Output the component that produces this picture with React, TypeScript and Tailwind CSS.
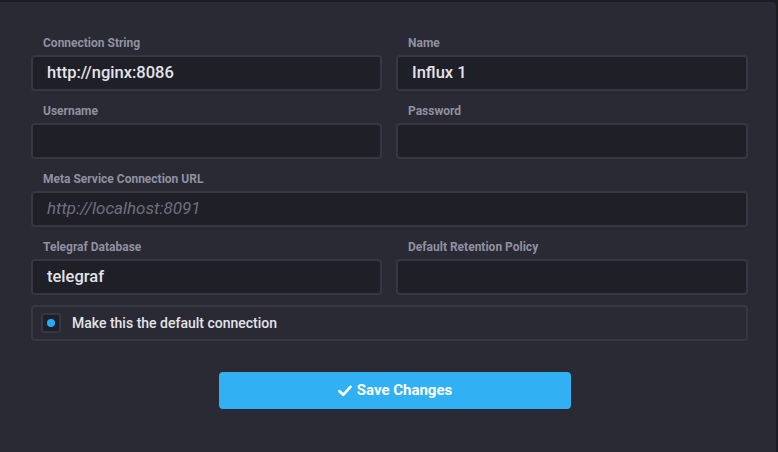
import React from 'react';

const font = { fontFamily: 'Roboto, "Liberation Sans", sans-serif' };

function Field({
  label,
  value,
  placeholder,
  className = '',
}: {
  label: string;
  value?: string;
  placeholder?: string;
  className?: string;
}) {
  return (
    <div className={`flex flex-col ${className}`}>
      <label className="mb-1 h-4 pl-3 text-[12px] font-bold leading-4 text-[#8f91a1]">{label}</label>
      <div className="flex h-9 items-center rounded-[4px] border-2 border-[#363743] bg-[#1f1f27] px-[14px]">
        {value ? (
          <span className="text-[16.5px] font-medium text-[#e3e3ea]">{value}</span>
        ) : placeholder ? (
          <span className="text-[17px] italic text-[#6d6f7e]">{placeholder}</span>
        ) : null}
      </div>
    </div>
  );
}

export default function App() {
  return (
    <div style={font} className="h-[452px] w-[778px] overflow-hidden bg-[#1c1c22]">
      <div className="mt-[2px] mr-[2px] h-[450px] rounded-tr-[4px] bg-[#292a33] pl-[31px] pt-[33px]">
        <div className="grid w-[717px] grid-cols-[351px_352px] gap-x-[14px] gap-y-3">
          <Field label="Connection String" value="http://nginx:8086" />
          <Field label="Name" value="Influx 1" />
          <Field label="Username" />
          <Field label="Password" />
          <Field
            label="Meta Service Connection URL"
            placeholder="http://localhost:8091"
            className="col-span-2"
          />
          <Field label="Telegraf Database" value="telegraf" />
          <Field label="Default Retention Policy" />
        </div>
        <div className="mt-[10px] flex h-9 w-[717px] items-center rounded-[4px] border-2 border-[#363743] px-2">
          <span className="flex h-5 w-5 items-center justify-center rounded-[3px] border-2 border-[#363743] bg-[#1f1f27]">
            <span className="h-2 w-2 rounded-full bg-[#22adf6]" />
          </span>
          <span className="ml-[11px] text-[14px] font-medium text-[#e3e3ea]">
            Make this the default connection
          </span>
        </div>
        <div className="mt-[31px] flex pl-[188px]">
          <button className="flex h-[37px] w-[352px] items-center justify-center gap-[5px] rounded-[4px] bg-[#31b0f3] text-[15px] font-bold text-white">
            <svg width="14" height="12" viewBox="0 0 14 12" fill="none">
              <path d="M1.5 6.2L5.2 9.8L12.5 1.8" stroke="white" strokeWidth="2.6" strokeLinecap="round" strokeLinejoin="round" />
            </svg>
            Save Changes
          </button>
        </div>
      </div>
    </div>
  );
}
